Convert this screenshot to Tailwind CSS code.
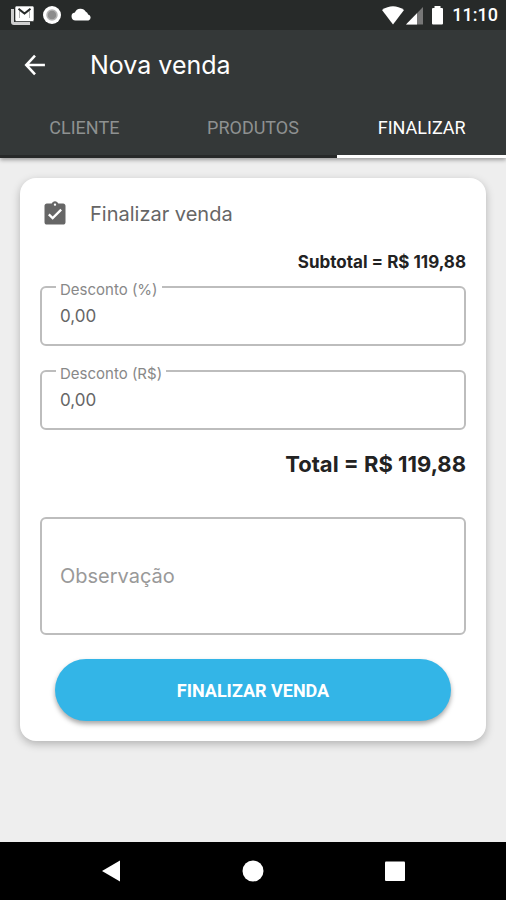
<!DOCTYPE html>
<html lang="pt-BR">
<head>
<meta charset="utf-8">
<meta name="viewport" content="width=device-width, initial-scale=1">
<title>Nova venda</title>
<script src="https://cdn.jsdelivr.net/npm/@tailwindcss/browser@4"></script>
</head>
<body class="flex min-h-screen flex-col bg-[#eeeeee] font-['Inter','Noto_Sans',sans-serif] text-[#666666]">
  <header class="relative bg-[#343838] text-white shadow-[0_2px_4px_rgba(0,0,0,0.35)]">
    <div class="flex h-[30px] items-center justify-between bg-[#272a29] pr-2 pl-[11px]">
      <div class="flex items-center gap-2">
        <svg class="h-5 w-6" viewBox="0 0 24 20" aria-hidden="true">
          <path d="M1.500 4v13q0 1.500 1.500 1.500h16" fill="none" stroke="#cfcfcf" stroke-width="3"/>
          <rect x="4" y="1" width="19" height="15.500" rx="1.500" fill="#fff" stroke="#272a29" stroke-width=".6"/>
          <path d="M8.500 13V5.500l5 3.800 5-3.800V13" fill="none" stroke="#b5b5b5" stroke-width="1"/>
          <path d="M7.500 3.800l6 4.700 6-4.700" fill="none" stroke="#272a29" stroke-width="2"/>
        </svg>
        <svg class="size-5" viewBox="0 0 20 20" aria-hidden="true">
          <circle cx="9" cy="10" r="9" fill="#fff"/>
          <circle cx="9" cy="10" r="5" fill="#8c8c8c" stroke="#b4b4b4" stroke-width="1.500"/>
        </svg>
        <svg class="h-5 w-[22px]" viewBox="0 0 22 20" aria-hidden="true">
          <path d="M4.500 15.500a4 4 0 0 1-.6-7.950A6 6 0 0 1 14.800 6.800a4.300 4.300 0 0 1 2.300 2.700A3.100 3.100 0 0 1 17.500 15.500z" fill="#fff"/>
        </svg>
      </div>
      <div class="flex items-center">
        <svg class="h-5 w-[70px]" viewBox="0 0 70 20" aria-hidden="true">
          <path d="M0 5Q11-2.500 22 5L11 19.500z" fill="#fff"/>
          <path d="M41 2v17.500H24z" fill="#777"/>
          <path d="M35 8.200v11.300H24z" fill="#fff"/>
          <path d="M55 1h3.500v2H60q1 0 1 1v14.500q0 1-1 1h-9q-1 0-1-1V4q0-1 1-1h1.500V1z" fill="#fff"/>
        </svg>
        <span class="font-['Roboto',sans-serif] text-[18px] leading-6 font-medium">11:10</span>
      </div>
    </div>
    <div class="flex h-[70px] items-center gap-10 px-5">
      <button type="button" aria-label="Voltar" class="flex size-[30px] items-center justify-center">
        <svg class="size-7" viewBox="0 0 24 24" fill="none" stroke="#fff" stroke-width="2.200" aria-hidden="true">
          <path d="M20.500 12H5M12 4 4.500 12 12 20"/>
        </svg>
      </button>
      <h1 class="text-[25px] leading-8">Nova venda</h1>
    </div>
    <nav class="grid h-[58px] grid-cols-3 text-center font-['Roboto',sans-serif] text-[18px] leading-6 text-[#8e9191]">
      <a href="#cliente" class="border-b-3 border-[#272929] pt-4">CLIENTE</a>
      <a href="#produtos" class="border-b-3 border-[#272929] pt-4">PRODUTOS</a>
      <a href="#finalizar" aria-current="page" class="border-b-3 border-white pt-4 text-white">FINALIZAR</a>
    </nav>
  </header>

  <main class="flex-1 px-5 pt-5">
    <form class="rounded-2xl bg-white px-5 pt-5 pb-5 shadow-[0_3px_9px_rgba(0,0,0,0.25)]">
      <div class="flex items-center gap-5">
        <svg class="h-7 w-[30px]" viewBox="0 0 24 24" fill="#666" aria-hidden="true">
          <path d="M19 3h-4.180C14.400 1.840 13.300 1 12 1s-2.400.84-2.820 2H5c-1.100 0-2 .9-2 2v14c0 1.100.9 2 2 2h14c1.100 0 2-.9 2-2V5c0-1.100-.9-2-2-2zm-7 0c.55 0 1 .45 1 1s-.45 1-1 1-1-.45-1-1 .45-1 1-1zm-2 14-4-4 1.410-1.410L10 14.170l6.590-6.590L18 9l-8 8z"/>
        </svg>
        <h2 class="text-xl leading-8">Finalizar venda</h2>
      </div>
      <p class="mt-5 text-right text-[17px] leading-6 font-bold text-[#222222]">Subtotal = R$ 119,88</p>
      <div class="relative mt-3">
        <label for="pct" class="absolute -top-1.5 left-4 bg-white px-1 text-[15px] leading-5 text-[#888888]">Desconto (%)</label>
        <input id="pct" type="text" value="0,00" class="block h-[60px] w-full rounded-md border-2 border-[#bdbdbd] px-[18px] text-[17px]">
      </div>
      <div class="relative mt-6">
        <label for="brl" class="absolute -top-1.5 left-4 bg-white px-1 text-[15px] leading-5 text-[#888888]">Desconto (R$)</label>
        <input id="brl" type="text" value="0,00" class="block h-[60px] w-full rounded-md border-2 border-[#bdbdbd] px-[18px] text-[17px]">
      </div>
      <p class="mt-[18px] text-right text-[22px] leading-8 font-bold text-[#222222]">Total = R$ 119,88</p>
      <textarea aria-label="Observação" placeholder="Observação" class="mt-[37px] block h-[118px] w-full resize-none rounded-md border-2 border-[#bdbdbd] px-[18px] py-[41px] text-xl leading-8 placeholder:text-[#999999]"></textarea>
      <div class="mt-6 px-[15px]">
        <button type="button" class="h-[62px] w-full rounded-full bg-[#33b5e7] font-['Roboto',sans-serif] text-[18px] font-bold text-white shadow-[0_3px_5px_rgba(0,0,0,0.35)]">FINALIZAR VENDA</button>
      </div>
    </form>
  </main>

  <nav aria-label="Sistema" class="grid h-[58px] grid-cols-3 place-items-center bg-black px-10">
    <button type="button" aria-label="Voltar"><svg class="size-6" viewBox="0 0 24 24" fill="#fff" aria-hidden="true"><path d="M21 1.500v21L3 12z"/></svg></button>
    <button type="button" aria-label="Início"><svg class="size-6" viewBox="0 0 24 24" fill="#fff" aria-hidden="true"><circle cx="12" cy="12" r="10.500"/></svg></button>
    <button type="button" aria-label="Recentes"><svg class="size-6" viewBox="0 0 24 24" fill="#fff" aria-hidden="true"><rect x="2" y="2.500" width="20" height="19.500" rx="1"/></svg></button>
  </nav>
</body>
</html>
